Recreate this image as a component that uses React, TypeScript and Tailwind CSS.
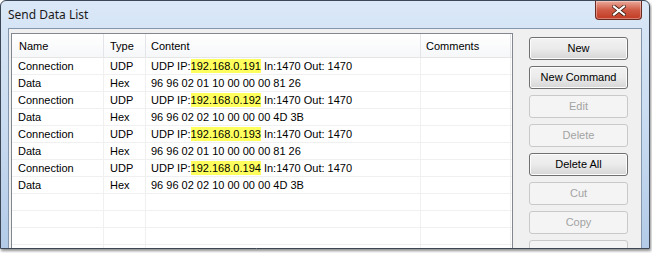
import React from "react";

type Row = { name: string; type: string; kind: "conn" | "data"; ip?: string; hex?: string };

const rows: Row[] = [
  { name: "Connection", type: "UDP", kind: "conn", ip: "192.168.0.191" },
  { name: "Data", type: "Hex", kind: "data", hex: "96 96 02 01 10 00 00 00 81 26" },
  { name: "Connection", type: "UDP", kind: "conn", ip: "192.168.0.192" },
  { name: "Data", type: "Hex", kind: "data", hex: "96 96 02 02 10 00 00 00 4D 3B" },
  { name: "Connection", type: "UDP", kind: "conn", ip: "192.168.0.193" },
  { name: "Data", type: "Hex", kind: "data", hex: "96 96 02 01 10 00 00 00 81 26" },
  { name: "Connection", type: "UDP", kind: "conn", ip: "192.168.0.194" },
  { name: "Data", type: "Hex", kind: "data", hex: "96 96 02 02 10 00 00 00 4D 3B" },
];

const font = { fontFamily: '"Liberation Sans", Arial, sans-serif' };

function Btn({ label, disabled }: { label: string; disabled?: boolean }) {
  return (
    <div
      className={
        "h-[23px] w-[99px] shrink-0 rounded-[3px] border flex items-center justify-center text-[11px] " +
        (disabled
          ? "border-[#c9c9c9] bg-[#f4f4f4] text-[#a3a3a3]"
          : "border-[#707070] bg-gradient-to-b from-[#f2f2f2] via-[#ebebeb] to-[#d6d6d6] text-black shadow-[inset_0_0_0_1px_#fcfcfc]")
      }
    >
      {label}
    </div>
  );
}

export default function App() {
  const empty = 4;
  return (
    <div className="w-[652px] h-[253px] bg-white overflow-hidden" style={font}>
      <div className="w-[650px] h-[249px] rounded-t-[6px] border border-[#3c4654] bg-gradient-to-b from-[#dae8f7] via-[#c9dbf0] to-[#b3cbe8] flex flex-col shadow-[1px_2px_3px_rgba(0,0,0,0.45)] overflow-hidden">
        {/* title bar */}
        <div className="h-[27px] flex items-start relative shrink-0">
          <div className="pl-[7px] pt-[5px] text-[12px] text-[#1a1a1a]" style={{ fontFamily: '"Noto Sans", "Open Sans", sans-serif' }}>
            Send Data List
          </div>
          <div className="flex-1" />
          <div className="mr-[7px] w-[47px] h-[19px] rounded-b-[4px] border border-t-0 border-[#6b2a20] bg-gradient-to-b from-[#e9a99a] via-[#cf5a45] to-[#c23a22] flex items-center justify-center shadow-[inset_0_0_0_1px_rgba(255,255,255,0.35)]">
            <svg width="14" height="11" viewBox="0 0 14 11">
              <path d="M2 1.5 L12 9.5 M12 1.5 L2 9.5" stroke="#3a1a12" strokeWidth="3.6" strokeLinecap="square" />
              <path d="M2 1.5 L12 9.5 M12 1.5 L2 9.5" stroke="#ffffff" strokeWidth="2.2" strokeLinecap="square" />
            </svg>
          </div>
        </div>
        {/* client */}
        <div className="flex-1 mx-[7px] border border-b-0 border-[#8496ab] bg-[#f0f0f0] flex pt-[4px] pl-[2px] min-h-0">
          {/* list view */}
          <div className="w-[502px] border border-[#828790] border-b-0 bg-white flex flex-col text-[11px] text-black">
            <div className="h-[24px] flex border-b border-[#e5e5e5] bg-gradient-to-b from-white to-[#f6f7f9] shrink-0">
              <div className="w-[92px] pl-[7px] pt-[2px] flex items-center border-r border-[#e3e5e8]">Name</div>
              <div className="w-[42px] pl-[6px] pt-[2px] flex items-center border-r border-[#e3e5e8]">Type</div>
              <div className="w-[275px] pl-[5px] pt-[2px] flex items-center border-r border-[#e3e5e8]">Content</div>
              <div className="w-[90px] pl-[5px] pt-[2px] flex items-center border-r border-[#e3e5e8]">Comments</div>
            </div>
            {rows.map((r, i) => (
              <div key={i} className="h-[17px] flex border-b border-[#f0f0f0] shrink-0">
                <div className="w-[92px] pl-[6px] pt-[1px] flex items-center border-r border-[#f0f0f0]">{r.name}</div>
                <div className="w-[42px] pl-[6px] pt-[1px] flex items-center border-r border-[#f0f0f0]">{r.type}</div>
                <div className="w-[275px] pl-[5px] flex items-center border-r border-[#f0f0f0] whitespace-pre">
                  {r.kind === "conn" ? (
                    <>
                      <span className="pt-[1px]">UDP IP:</span>
                      <span className="bg-[#ffff5e] h-[14px] pt-[1px] flex items-center">{r.ip}</span>
                      <span className="pt-[1px]"> In:1470 Out: 1470</span>
                    </>
                  ) : (
                    <span className="pt-[1px]">{r.hex}</span>
                  )}
                </div>
                <div className="w-[90px] border-r border-[#f0f0f0]" />
              </div>
            ))}
            {Array.from({ length: empty }).map((_, i) => (
              <div key={"e" + i} className="h-[17px] flex border-b border-[#f0f0f0] shrink-0">
                <div className="w-[92px] border-r border-[#f0f0f0]" />
                <div className="w-[42px] border-r border-[#f0f0f0]" />
                <div className="w-[275px] border-r border-[#f0f0f0]" />
                <div className="w-[90px] border-r border-[#f0f0f0]" />
              </div>
            ))}
          </div>
          {/* buttons */}
          <div className="ml-[16px] pt-[4px] flex flex-col gap-[6px] min-h-0 overflow-hidden">
            <Btn label="New" />
            <Btn label="New Command" />
            <Btn label="Edit" disabled />
            <Btn label="Delete" disabled />
            <Btn label="Delete All" />
            <Btn label="Cut" disabled />
            <Btn label="Copy" disabled />
            <Btn label="" disabled />
          </div>
        </div>
      </div>
    </div>
  );
}
